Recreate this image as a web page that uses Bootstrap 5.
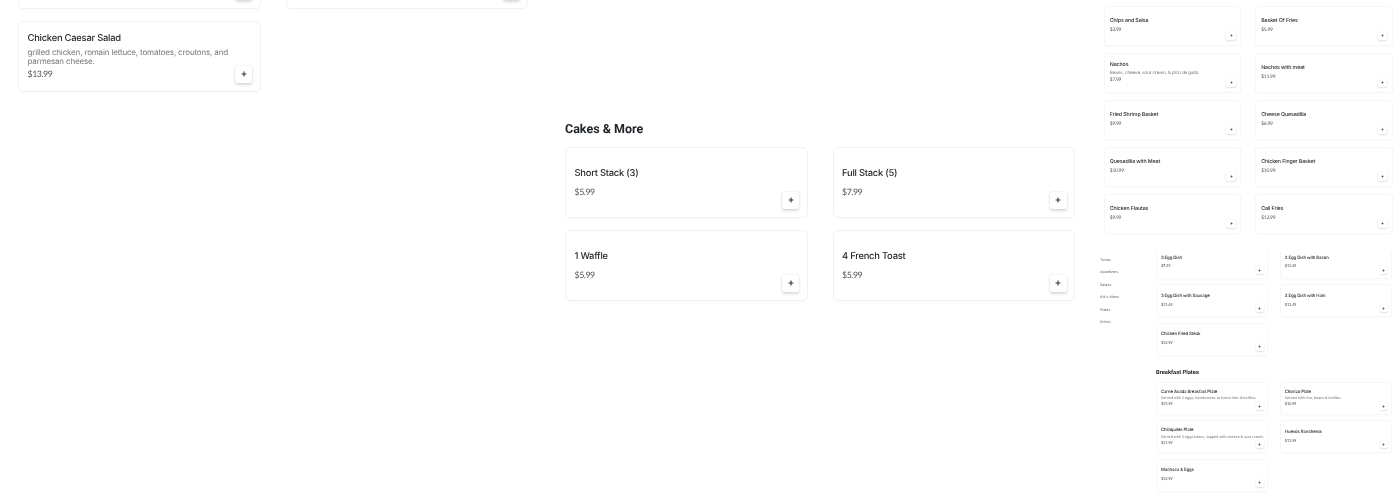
<!DOCTYPE html>
<html lang="en">
<head>
  <meta charset="UTF-8" />
  <title>Menu</title>
  <link href="https://cdn.jsdelivr.net/npm/bootstrap@5.3.0/dist/css/bootstrap.min.css" rel="stylesheet">
  <style>
    html, body { height: 500px; overflow: hidden; background: #fff; }
    body { font-family: Inter, "Liberation Sans", sans-serif; color: #212529; text-rendering: geometricPrecision; }
    /* every size below is in em, each shot only changes the base font size */
    .shot-big { font-size: 10px; width: 510px; filter: blur(.25px); }
    .shot-mid { font-size: 5.66px; filter: blur(.35px); }
    .shot-small { font-size: 4.63px; filter: blur(.35px); }
    .col-left { margin-left: 18px; }
    .col-left .item-grid { margin-top: -6.2em; }
    .col-center { margin-left: 37px; }
    .col-center .sec-title { margin-top: 122px; }
    .col-right { margin-left: 25px; width: 300px; }
    .col-right .shot-mid { margin: 6px 0 18px 4px; }
    .side-links { width: 56px; padding-top: 6px; font-size: 3.6px; color: #666; gap: 7.1px; filter: blur(.3px); }
    .clip-box { height: 249px; overflow: hidden; }
    .clip-box > .item-grid:first-child { margin-top: -6px; }
    .sec-title { font-size: 1.25em; font-weight: 700; line-height: 1.2; margin-bottom: .8em; font-family: Roboto, sans-serif; }
    .item-grid { display: grid; grid-template-columns: 24.25em 24.25em; gap: 1.2em 2.5em; }
    .item-grid + .sec-title { margin-top: 2.55em; }
    .item-card { height: 7.1em; padding: 0 .85em; border: 1px solid #f1f1f1; border-radius: .5em; box-shadow: 0 1px 2px rgba(0,0,0,.02); justify-content: center; position: relative; }
    .shot-mid .item-card, .shot-small .item-card { border-color: #f6f6f6; }
    .shot-small .item-desc { white-space: nowrap; }
    .item-name { font-size: .94em; letter-spacing: -.025em; font-weight: 500; line-height: 1.2; color: #2a2a2a; margin-bottom: .8em; }
    .item-desc { font-size: .8em; letter-spacing: -.02em; line-height: 1.1; color: #777; margin-bottom: .5em; }
    .item-name:has(+ .item-desc) { margin-bottom: .35em; }
    .item-price { font-family: Lato, sans-serif; font-size: .88em; letter-spacing: -.05em; line-height: 1.2; color: #555; }
    .add-btn { position: absolute; right: .75em; bottom: .85em; width: 1.7em; height: 1.7em; padding: 0; border: 0; border-radius: .25em; background: #fff url("data:image/svg+xml,%3Csvg xmlns='http://www.w3.org/2000/svg' viewBox='0 0 10 10'%3E%3Cpath d='M5 1v8M1 5h8' stroke='%23333' stroke-width='1.8'/%3E%3C/svg%3E") center / .6em .6em no-repeat; box-shadow: 0 0 0 .06em rgba(0,0,0,.04), 0 .15em .3em rgba(0,0,0,.14); }
  </style>
</head>
<body class="d-flex m-0">

  <div class="col-left shot-big">
    <div class="item-grid">
      <div class="card item-card"><button class="add-btn" type="button"></button></div>
      <div class="card item-card"><button class="add-btn" type="button"></button></div>
      <div class="card item-card">
        <div class="item-name">Chicken Caesar Salad</div>
        <div class="item-desc">grilled chicken, romain lettuce, tomatoes, croutons, and parmesan cheese.</div>
        <div class="item-price">$13.99</div>
        <button class="add-btn" type="button"></button>
      </div>
    </div>
  </div>

  <div class="col-center shot-big">
    <div class="sec-title">Cakes &amp; More</div>
    <div class="item-grid">
      <div class="card item-card"><div class="item-name">Short Stack (3)</div><div class="item-price">$5.99</div><button class="add-btn" type="button"></button></div>
      <div class="card item-card"><div class="item-name">Full Stack (5)</div><div class="item-price">$7.99</div><button class="add-btn" type="button"></button></div>
      <div class="card item-card"><div class="item-name">1 Waffle</div><div class="item-price">$5.99</div><button class="add-btn" type="button"></button></div>
      <div class="card item-card"><div class="item-name">4 French Toast</div><div class="item-price">$5.99</div><button class="add-btn" type="button"></button></div>
    </div>
  </div>

  <div class="col-right">
    <div class="shot-mid">
      <div class="item-grid">
        <div class="card item-card"><div class="item-name">Chips and Salsa</div><div class="item-price">$3.99</div><button class="add-btn" type="button"></button></div>
        <div class="card item-card"><div class="item-name">Basket Of Fries</div><div class="item-price">$5.99</div><button class="add-btn" type="button"></button></div>
        <div class="card item-card"><div class="item-name">Nachos</div><div class="item-desc">Beans, cheese, sour cream, &amp; pico de gallo.</div><div class="item-price">$7.99</div><button class="add-btn" type="button"></button></div>
        <div class="card item-card"><div class="item-name">Nachos with meat</div><div class="item-price">$11.99</div><button class="add-btn" type="button"></button></div>
        <div class="card item-card"><div class="item-name">Fried Shrimp Basket</div><div class="item-price">$9.99</div><button class="add-btn" type="button"></button></div>
        <div class="card item-card"><div class="item-name">Cheese Quesadilla</div><div class="item-price">$6.99</div><button class="add-btn" type="button"></button></div>
        <div class="card item-card"><div class="item-name">Quesadilla with Meat</div><div class="item-price">$10.99</div><button class="add-btn" type="button"></button></div>
        <div class="card item-card"><div class="item-name">Chicken Finger Basket</div><div class="item-price">$10.99</div><button class="add-btn" type="button"></button></div>
        <div class="card item-card"><div class="item-name">Chicken Flautas</div><div class="item-price">$9.99</div><button class="add-btn" type="button"></button></div>
        <div class="card item-card"><div class="item-name">Cali Fries</div><div class="item-price">$13.99</div><button class="add-btn" type="button"></button></div>
      </div>
    </div>

    <div class="d-flex">
      <ul class="side-links list-unstyled d-flex flex-column m-0">
        <li>Tortas</li>
        <li>Appetizers</li>
        <li>Salads</li>
        <li>Kid's Menu</li>
        <li>Plates</li>
        <li>Drinks</li>
      </ul>
      <div class="shot-small clip-box">
        <div class="item-grid">
          <div class="card item-card"><div class="item-name">3 Egg Dish</div><div class="item-price">$7.49</div><button class="add-btn" type="button"></button></div>
          <div class="card item-card"><div class="item-name">3 Egg Dish with Bacon</div><div class="item-price">$11.49</div><button class="add-btn" type="button"></button></div>
          <div class="card item-card"><div class="item-name">3 Egg Dish with Sausage</div><div class="item-price">$11.49</div><button class="add-btn" type="button"></button></div>
          <div class="card item-card"><div class="item-name">3 Egg Dish with Ham</div><div class="item-price">$11.49</div><button class="add-btn" type="button"></button></div>
          <div class="card item-card"><div class="item-name">Chicken Fried Steak</div><div class="item-price">$14.99</div><button class="add-btn" type="button"></button></div>
        </div>
        <div class="sec-title">Breakfast Plates</div>
        <div class="item-grid">
          <div class="card item-card"><div class="item-name">Carne Asada Breakfast Plate</div><div class="item-desc">Served with 3 eggs, hashbrowns or home fries &amp; tortillas.</div><div class="item-price">$15.99</div><button class="add-btn" type="button"></button></div>
          <div class="card item-card"><div class="item-name">Chorizo Plate</div><div class="item-desc">Served with rice, beans &amp; tortillas.</div><div class="item-price">$10.99</div><button class="add-btn" type="button"></button></div>
          <div class="card item-card"><div class="item-name">Chilaquiles Plate</div><div class="item-desc">Served with 3 eggs beans, topped with cheese &amp; sour cream.</div><div class="item-price">$11.99</div><button class="add-btn" type="button"></button></div>
          <div class="card item-card"><div class="item-name">Huevos Rancheros</div><div class="item-price">$11.99</div><button class="add-btn" type="button"></button></div>
          <div class="card item-card"><div class="item-name">Machaca &amp; Eggs</div><div class="item-price">$14.99</div><button class="add-btn" type="button"></button></div>
        </div>
      </div>
    </div>
  </div>

</body>
</html>
